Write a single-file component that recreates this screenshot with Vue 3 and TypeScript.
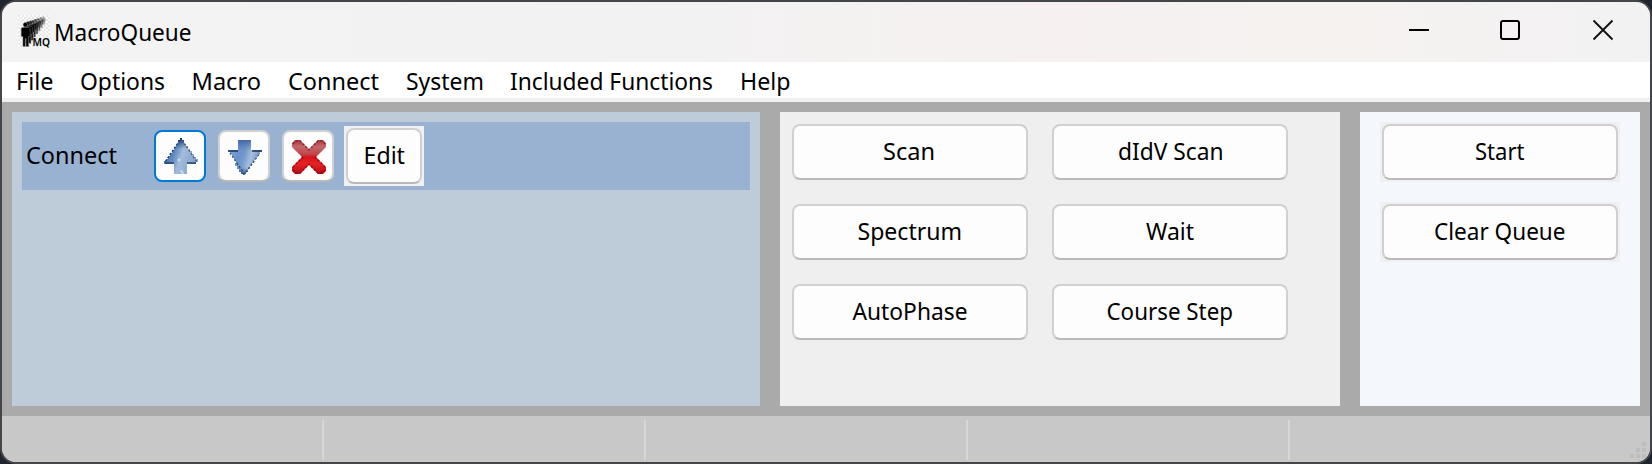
<script setup lang="ts">
interface Label { text: string; w: number; pad?: number }

const menus: Label[] = [
  { text: 'File', w: 37.5, pad: 2 },
  { text: 'Options', w: 85 },
  { text: 'Macro', w: 69.5, pad: 0.5 },
  { text: 'Connect', w: 91, pad: 1 },
  { text: 'System', w: 78 },
  { text: 'Included Functions', w: 203 },
  { text: 'Help', w: 50.5, pad: 1 },
]
const macros: Label[] = [
  { text: 'Scan', w: 52, pad: -1 },
  { text: 'dIdV Scan', w: 105.5, pad: 1 },
  { text: 'Spectrum', w: 104.5, pad: -0.5 },
  { text: 'Wait', w: 48 },
  { text: 'AutoPhase', w: 115, pad: -0.5 },
  { text: 'Course Step', w: 126.5, pad: -0.5 },
]
const actions: Label[] = [
  { text: 'Start', w: 49.5 },
  { text: 'Clear Queue', w: 131.5 },
]
const queueFigures = Array.from({ length: 8 }, (_, i) => 7 - i)
</script>

<template>
  <div class="desktop">
    <div class="window">
      <header class="titlebar">
        <svg class="app-icon" width="36" height="36" viewBox="0 0 36 36">
          <defs>
            <pattern id="checker" width="4" height="4" patternUnits="userSpaceOnUse">
              <rect width="4" height="4" fill="#fafafa" />
              <rect width="2" height="2" fill="#e8e8e8" />
              <rect x="2" y="2" width="2" height="2" fill="#e8e8e8" />
            </pattern>
          </defs>
          <rect width="32" height="32" fill="url(#checker)" />
          <g v-for="i in queueFigures" :key="i" :opacity="1 - i * 0.08"
             :transform="`translate(${3 + i * 2.9} ${7.5 - i * 0.85}) scale(${0.96 - i * 0.075} ${1 - i * 0.095})`">
            <circle cx="4.5" cy="2.2" r="2.3" fill="#000" stroke="#999" stroke-width=".5" />
            <path d="M1 5h7.5l1 1.2V14H8v10H5.2v-8h-.7v8H2V14H.2V6z" fill="#000" stroke="#888" stroke-width=".5" />
          </g>
          <text x="14.5" y="31" textLength="17.5" lengthAdjust="spacingAndGlyphs" class="icon-text">MQ</text>
        </svg>
        <svg class="title" width="140" height="32">
          <text x="0" y="24" textLength="137.5" lengthAdjust="spacingAndGlyphs">MacroQueue</text>
        </svg>
        <svg class="window-controls" width="206" height="22" viewBox="0 0 206 22">
          <path d="M1 11H21" stroke="#000" stroke-width="2" />
          <rect x="93" y="2" width="18" height="18" rx="2" fill="none" stroke="#000" stroke-width="2" />
          <path d="M185.5 1.5 204.5 20.5M204.5 1.5 185.5 20.5" stroke="#111" stroke-width="1.9" />
        </svg>
      </header>

      <nav class="menu">
        <svg v-for="m in menus" :key="m.text" class="label" :width="m.w + (m.pad ?? 0)" height="32">
          <text :x="m.pad ?? 0" y="24" :textLength="m.w" lengthAdjust="spacingAndGlyphs">{{ m.text }}</text>
        </svg>
      </nav>

      <main class="body">
        <section class="queue">
          <div class="queue-row">
            <svg class="label row-name" width="92" height="32">
              <text x="1" y="24" textLength="91" lengthAdjust="spacingAndGlyphs">Connect</text>
            </svg>
            <button class="btn tool focused" aria-label="Move up">
              <svg width="36" height="38" viewBox="0 0 36 38">
                <defs>
                  <linearGradient id="up" x1="0" y1="0" x2="1" y2=".35">
                    <stop offset="0" stop-color="#3d5f97" />
                    <stop offset=".4" stop-color="#6188c1" />
                    <stop offset=".62" stop-color="#a3bddb" />
                    <stop offset="1" stop-color="#86a5cc" />
                  </linearGradient>
                  <linearGradient id="tip" x1="0" y1="0" x2="0" y2="1">
                    <stop offset="0" stop-color="#122e60" />
                    <stop offset=".45" stop-color="#244b87" stop-opacity="0" />
                  </linearGradient>
                </defs>
                <path d="M17 1h2v2h2v4h2v2h2v3h2v2h2v3h2v3h2v2h2v3h-2v2h-9v10H11V27H1v-3h2v-2h2v-3h2v-3h2v-3h2v-3h2V7h2V3h2z" fill="url(#up)" />
                <path d="M17 1h2v2h2v4h2v2h2v3h2v2h2v3h2v3h2v2h2v3H1v-1h2v-2h2v-3h2v-3h2v-3h2v-3h2V7h2V3h2z" fill="url(#tip)" />
                <path d="M17 3 2 25" stroke="#1d3b6b" stroke-width="1.3" stroke-dasharray="2 2" />
                <path d="m19 3 15 22" stroke="#3b5479" stroke-width="1.2" stroke-dasharray="2 2" />
                <path d="M2 26h9M24 26h9" stroke="#1d4471" stroke-width="1.5" />
                <circle cx="16" cy="23" r="1.5" fill="#c5daf5" />
                <path d="M17 34h2v2h2" fill="none" stroke="#cadcf0" stroke-width="1.5" />
              </svg>
            </button>
            <button class="btn tool" aria-label="Move down">
              <svg width="36" height="38" viewBox="0 0 36 38">
                <defs>
                  <linearGradient id="down" x1="0" y1="0" x2="1" y2=".3">
                    <stop offset="0" stop-color="#8eaddd" />
                    <stop offset=".38" stop-color="#6c91cb" />
                    <stop offset=".55" stop-color="#7599ca" />
                    <stop offset=".75" stop-color="#a5bedd" />
                    <stop offset="1" stop-color="#718fbd" />
                  </linearGradient>
                  <linearGradient id="down-shade" x1="0" y1="0" x2="0" y2="1">
                    <stop offset="0" stop-color="#234d88" stop-opacity=".6" />
                    <stop offset=".3" stop-color="#365f9d" stop-opacity="0" />
                    <stop offset=".75" stop-color="#365f9d" stop-opacity="0" />
                    <stop offset="1" stop-color="#12366d" />
                  </linearGradient>
                </defs>
                <path d="M11 3h13v10h11v2h-2v2h-2v3h-2v3h-2v3h-2v3h-2v3h-2v3h-2v2h-2v2h-1v-2h-2v-2h-2v-3h-2v-3h-2v-3H9v-3H7v-3H5v-3H3v-2H1v-2h10z" fill="url(#down)" />
                <path d="M11 3h13v10h11v2h-2v2h-2v3h-2v3h-2v3h-2v3h-2v3h-2v3h-2v2h-2v2h-1v-2h-2v-2h-2v-3h-2v-3h-2v-3H9v-3H7v-3H5v-3H3v-2H1v-2h10z" fill="url(#down-shade)" />
                <path d="M3 16 17.5 37 33 16" fill="none" stroke="#254a7b" stroke-width="1.3" stroke-dasharray="2 2" />
                <path d="M1 14h10M25 14h10" stroke="#14345f" stroke-width="1.7" />
              </svg>
            </button>
            <button class="btn tool" aria-label="Remove">
              <svg width="36" height="38" viewBox="0 0 36 38">
                <defs>
                  <linearGradient id="cross" gradientUnits="userSpaceOnUse" x1="0" y1="3" x2="0" y2="37">
                    <stop offset="0" stop-color="#a8383d" />
                    <stop offset=".2" stop-color="#c4686b" />
                    <stop offset=".43" stop-color="#bd4347" />
                    <stop offset=".5" stop-color="#d91318" />
                    <stop offset=".7" stop-color="#e62227" />
                    <stop offset="1" stop-color="#b30d13" />
                  </linearGradient>
                </defs>
                <path d="M1 6 4 3h5l9 9 9-9h5l3 3v4L25 20l10 10v4l-3 3h-5l-9-9-9 9H4l-3-3v-4l10-10L1 10z" fill="url(#cross)" />
                <path d="M2 7l3-3h4l9 9 9-9h4l3 3" fill="none" stroke="#8b2026" stroke-width="1.4" stroke-dasharray="2 2" />
                <path d="M2 33l3 3h4l9-9 9 9h4l3-3M12 20 2 30M24 20l10 10" fill="none" stroke="#98090e" stroke-width="1.4" stroke-dasharray="2 2" />
              </svg>
            </button>
            <div class="btn-backdrop edit-backdrop">
              <button class="btn edit">
                <svg class="label" width="42" height="32">
                  <text x="0.5" y="24" textLength="41.5" lengthAdjust="spacingAndGlyphs">Edit</text>
                </svg>
              </button>
            </div>
          </div>
        </section>

        <section class="macros">
          <button v-for="m in macros" :key="m.text" class="btn wide">
            <svg class="label" :width="m.w" height="32">
              <text :x="m.pad ?? 0" y="24" :textLength="m.w" lengthAdjust="spacingAndGlyphs">{{ m.text }}</text>
            </svg>
          </button>
        </section>

        <section class="actions">
          <div v-for="a in actions" :key="a.text" class="btn-backdrop">
            <button class="btn wide">
              <svg class="label" :width="a.w" height="32">
                <text :x="a.pad ?? 0" y="24" :textLength="a.w" lengthAdjust="spacingAndGlyphs">{{ a.text }}</text>
              </svg>
            </button>
          </div>
        </section>
      </main>

      <footer class="status">
        <div v-for="n in 4" :key="n" class="status-cell"></div>
        <svg class="grip" width="16" height="16" viewBox="0 0 16 16">
          <path d="M12 0h4v4h-4zM6 6h4v4H6zM12 6h4v4h-4zM0 12h4v4H0zM6 12h4v4H6zM12 12h4v4h-4z" fill="#bdbdbd" />
        </svg>
      </footer>
    </div>
  </div>
</template>

<style>
body {
  margin: 0;
  overflow: hidden;
}
</style>

<style scoped>
.desktop {
  box-sizing: border-box;
  width: 1652px;
  height: 464px;
  background: #20242e;
  font-family: "Noto Sans", "Open Sans", sans-serif;
}
.window {
  box-sizing: border-box;
  width: 1652px;
  height: 464px;
  display: flex;
  flex-direction: column;
  border: 2px solid #45464a;
  border-radius: 16px;
  overflow: hidden;
  background: #aaa;
}
.titlebar {
  box-sizing: border-box;
  height: 60px;
  flex: none;
  display: flex;
  align-items: flex-start;
  padding: 13px 36px 0 16px;
  background: linear-gradient(90deg, #f3f3f3 0%, #f3f2f2 42%, #f6f1f0 64%, #f5f2f0 82%, #f3f2f3 100%);
}
.app-icon {
  flex: none;
  overflow: visible;
}
.title {
  margin: 2px 0 0;
  font-size: 23px;
  overflow: visible;
}
.icon-text {
  font: 600 10px "Noto Sans", sans-serif;
}
.window-controls {
  margin: 4px 0 0 auto;
}
.menu {
  height: 36px;
  flex: none;
  display: flex;
  gap: 26.3px;
  padding: 0 12px;
  background: #fff;
  border-bottom: 4px solid #f0f0f0;
}
.menu .label {
  margin-top: 4px;
}
.label {
  display: block;
  flex: none;
  overflow: visible;
  font-size: 24px;
  fill: #000;
}
.body {
  box-sizing: border-box;
  height: 314px;
  flex: none;
  display: flex;
  gap: 20px;
  padding: 10px;
}
.queue {
  box-sizing: border-box;
  width: 748px;
  padding: 10px;
  background: #becbd9;
}
.queue-row {
  box-sizing: border-box;
  height: 68px;
  display: flex;
  align-items: center;
  gap: 12px;
  padding-left: 3px;
  background: #99b2d1;
}
.row-name {
  margin-right: 25px;
}
.btn {
  box-sizing: border-box;
  display: flex;
  align-items: center;
  justify-content: center;
  margin: 0;
  padding: 0;
  border: 2px solid #d0d0d0;
  border-bottom-color: #bababa;
  border-radius: 8px;
  background: #fdfdfd;
  font-family: inherit;
}
.tool {
  width: 52px;
  height: 52px;
  flex: none;
  padding-left: 2px;
}
.focused {
  border-color: #0078d4;
}
.btn-backdrop {
  padding: 2px;
  background: #f0f0f0;
}
.edit-backdrop {
  margin-left: -2px;
}
.edit {
  width: 76px;
  height: 56px;
}
.wide {
  width: 236px;
  height: 56px;
}
.macros {
  box-sizing: border-box;
  width: 560px;
  display: grid;
  grid-template-columns: 236px 236px;
  align-content: start;
  gap: 24px;
  padding: 12px;
  background: #efefef;
}
.actions {
  box-sizing: border-box;
  width: 280px;
  display: flex;
  flex-direction: column;
  gap: 20px;
  padding: 10px 20px;
  background: #f4f7fc;
}
.status {
  box-sizing: border-box;
  height: 46px;
  flex: none;
  display: flex;
  align-items: flex-start;
  padding-top: 4px;
  background: #c8c8c8;
}
.status-cell {
  box-sizing: border-box;
  width: 322px;
  height: 40px;
  border-right: 2px solid #d7d7d7;
}
.grip {
  margin: 22px 4px 0 auto;
}
</style>
